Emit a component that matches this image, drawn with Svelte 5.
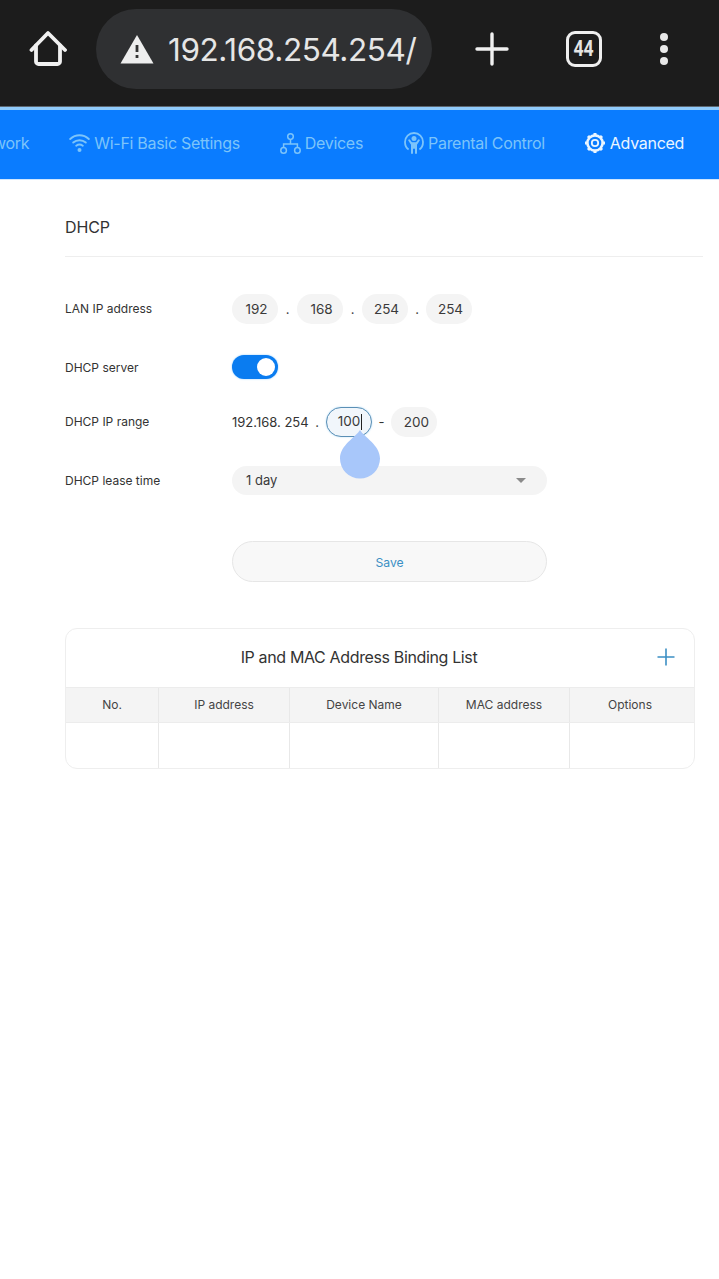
<script>
  const tabs = [
    { label: 'Network', icon: 'none' },
    { label: 'Wi-Fi Basic Settings', icon: 'wifi' },
    { label: 'Devices', icon: 'devices' },
    { label: 'Parental Control', icon: 'parent' },
    { label: 'Advanced', icon: 'gear', active: true }
  ];
  const heads = [
    { label: 'No.', w: 93 },
    { label: 'IP address', w: 131 },
    { label: 'Device Name', w: 149 },
    { label: 'MAC address', w: 131 },
    { label: 'Options', w: 124 }
  ];
</script>

<div class="page">
  <header class="browser">
    <svg class="home" width="38" height="38" viewBox="0 0 38 38" fill="none" stroke="#f0f0f0" stroke-width="3.8" stroke-linecap="round" stroke-linejoin="round">
      <path d="M2.5 20 L19 3 L36 20" />
      <path d="M7 15.5 V31.5 a2.5 2.5 0 0 0 2.5 2.5 H28.5 a2.5 2.5 0 0 0 2.5 -2.5 V15.5" />
    </svg>
    <div class="omnibox">
      <svg width="34" height="30" viewBox="0 0 34 30">
        <path d="M17 1 L33.5 29.5 H0.5 Z" fill="#eeeeee" />
        <rect x="15.6" y="11" width="2.8" height="7" fill="#333" />
        <rect x="15.6" y="21" width="2.8" height="3" fill="#333" />
      </svg>
      <span class="url">192.168.254.254/</span>
    </div>
    <svg class="plus" width="34" height="34" viewBox="0 0 34 34" stroke="#f0f0f0" stroke-width="3.4" stroke-linecap="round">
      <path d="M17 2 V32 M2 17 H32" />
    </svg>
    <div class="count"><span>44</span></div>
    <div class="dots"><i></i><i></i><i></i></div>
  </header>

  <nav class="tabs">
    {#each tabs as t}
      <div class="tab" class:active={t.active} class:parent={t.icon === 'parent'}>
        {#if t.icon === 'wifi'}
          <svg width="21" height="20" viewBox="0 0 21 20" fill="none" stroke="currentColor" stroke-width="1.9" stroke-linecap="round">
            <path d="M1.2 6 C6.5 1 14.5 1 19.8 6" />
            <path d="M4.2 9.5 C7.7 6.4 13.3 6.4 16.8 9.5" />
            <path d="M7.2 12.7 C9.2 11.2 11.8 11.2 13.8 12.7" />
            <circle cx="10.5" cy="17" r="2" fill="currentColor" stroke="none" />
          </svg>
        {:else if t.icon === 'devices'}
          <svg width="21" height="21" viewBox="0 0 21 21" fill="none" stroke="currentColor" stroke-width="1.5">
            <circle cx="10.5" cy="3.6" r="2.8" />
            <circle cx="3.6" cy="17.4" r="2.8" />
            <circle cx="17.4" cy="17.4" r="2.8" />
            <path d="M10.5 6.4 V11 M3.6 14.6 V11 H17.4 V14.6" />
          </svg>
        {:else if t.icon === 'parent'}
          <svg width="20" height="22" viewBox="0 0 20 22" fill="none" stroke="currentColor" stroke-width="1.8">
            <path d="M4.6 17.6 C2.2 16 1 13.2 1 10 C1 5 5 1 10 1 C15 1 19 5 19 10 C19 13.2 17.8 16 15.4 17.6" />
            <circle cx="10" cy="6.6" r="2.5" fill="currentColor" stroke="none" />
            <path d="M5.2 8.2 L7.4 11.4 H12.6 L14.8 8.2 M8 11 V21 M12 11 V21 M10 11 V16" stroke-width="2" stroke-linecap="round" />
          </svg>
        {:else if t.icon === 'gear'}
          <svg width="22" height="22" viewBox="0 0 22 22" fill="none" stroke="currentColor">
            <circle cx="11" cy="11" r="7.6" stroke-width="2.6" />
            <circle cx="11" cy="11" r="3.2" stroke-width="1.8" />
            <path d="M11 1 V3 M11 19 V21 M1 11 H3 M19 11 H21 M4 4 L5.5 5.5 M16.5 16.5 L18 18 M4 18 L5.5 16.5 M16.5 5.5 L18 4" stroke-width="3" />
          </svg>
        {/if}
        <span>{t.label}</span>
      </div>
    {/each}
  </nav>

  <main class="content">
    <h1>DHCP</h1>

    <div class="row lan">
      <span class="label">LAN IP address</span>
      <div class="field">
        <span class="pill">192</span><span class="dot">.</span>
        <span class="pill">168</span><span class="dot">.</span>
        <span class="pill">254</span><span class="dot n">.</span>
        <span class="pill">254</span>
      </div>
    </div>

    <div class="row server">
      <span class="label">DHCP server</span>
      <div class="toggle"><i></i></div>
    </div>

    <div class="row range">
      <span class="label">DHCP IP range</span>
      <div class="field">
        <span class="prefix">192.168. 254</span><span class="dot wide">.</span>
        <span class="pill focus">100<b class="caret"></b>
          <svg class="handle" width="42" height="50" viewBox="0 0 42 50">
            <path d="M21 1 C25 8 41 16 41 29.5 A20 20 0 0 1 1 29.5 C1 16 17 8 21 1 Z" fill="#a8c7fa" />
          </svg>
        </span>
        <span class="dash">-</span>
        <span class="pill end">200</span>
      </div>
    </div>

    <div class="row lease">
      <span class="label">DHCP lease time</span>
      <div class="select"><span>1 day</span><i class="arrow"></i></div>
    </div>

    <div class="save-row"><button class="save">Save</button></div>

    <section class="card">
      <div class="card-title">
        <span>IP and MAC Address Binding List</span>
        <svg class="add" width="18" height="18" viewBox="0 0 18 18" stroke="#3b8fc4" stroke-width="1.6">
          <path d="M9 0.5 V17.5 M0.5 9 H17.5" />
        </svg>
      </div>
      <div class="thead">
        {#each heads as h}
          <div class="th" style="width:{h.w}px">{h.label}</div>
        {/each}
      </div>
      <div class="tbody">
        {#each heads as h}
          <div class="td" style="width:{h.w}px"></div>
        {/each}
      </div>
    </section>
  </main>
</div>

<style>
  :global(body) {
    margin: 0;
    background: #fff;
  }
  .page {
    width: 719px;
    height: 1279px;
    overflow: hidden;
    background: #fff;
    font-family: Inter, "Liberation Sans", sans-serif;
    color: #333;
  }
  .browser {
    box-sizing: border-box;
    height: 107px;
    background: #1c1c1c;
    border-bottom: 1px solid #5b6670;
    display: flex;
    align-items: flex-start;
    padding: 9px 0 0 29px;
  }
  .home { margin-top: 21px; }
  .omnibox {
    box-sizing: border-box;
    width: 336px;
    height: 80px;
    margin-left: 29px;
    border-radius: 40px;
    background: #2f3032;
    display: flex;
    align-items: center;
    padding: 0 0 0 24px;
    overflow: hidden;
    gap: 14px;
  }
  .url {
    font-size: 31.5px;
    color: #e6e6e6;
    white-space: nowrap;
    letter-spacing: -0.4px;
  }
  .plus { margin: 23px 0 0 43px; }
  .count {
    box-sizing: border-box;
    width: 36px;
    height: 36px;
    margin: 22px 0 0 57px;
    border: 3.5px solid #eee;
    border-radius: 9px;
    color: #e4e4e4;
    display: flex;
    align-items: center;
    justify-content: center;
  }
  .count span {
    display: inline-block;
    font: 700 22px/1 Roboto, sans-serif;
    transform: scaleX(0.8);
  }
  .dots {
    margin: 24px 0 0 58px;
    display: flex;
    flex-direction: column;
    gap: 4px;
  }
  .dots i {
    width: 8px;
    height: 8px;
    border-radius: 50%;
    background: #e8e8e8;
  }
  .tabs {
    box-sizing: border-box;
    height: 73px;
    background: #0a7cff;
    border-top: 3px solid #8fcbfb;
    border-bottom: 1px solid #cfe6ff;
    display: flex;
    justify-content: flex-end;
    align-items: center;
    gap: 40px;
    padding: 0 35px 3px 0;
    overflow: hidden;
    white-space: nowrap;
  }
  .tab {
    display: flex;
    align-items: center;
    gap: 4px;
    font-size: 16px;
    letter-spacing: -0.3px;
    color: #7cc4fa;
    flex-shrink: 0;
  }
  .tab.active { color: #eaf5ff; margin-left: -1px; }
  .tab.parent { margin-left: 1px; }
  .content {
    padding: 0 0 0 65px;
  }
  h1 {
    margin: 0 16px 0 0;
    font-size: 16px;
    font-weight: 400;
    letter-spacing: -0.1px;
    color: #333;
    height: 77px;
    line-height: 94px;
    box-sizing: border-box;
    border-bottom: 1px solid #eee;
  }
  .row {
    display: flex;
    align-items: center;
  }
  .label {
    width: 167px;
    font-size: 12px;
    color: #333;
  }
  .lan .label, .range .label { margin-bottom: 2px; }
  .field {
    display: flex;
    align-items: center;
    font-size: 13px;
  }
  .lan { margin-top: 36px; height: 32px; }
  .server { margin-top: 29px; height: 26px; }
  .range { margin-top: 27px; height: 30px; }
  .lease { margin-top: 28px; height: 30px; }
  .pill {
    position: relative;
    box-sizing: border-box;
    width: 46px;
    height: 30px;
    padding-left: 3px;
    line-height: 30px;
    border-radius: 15px;
    background: #f4f4f4;
    text-align: center;
    font-size: 13.5px;
    color: #3a3a3a;
  }
  .pill.end { padding-left: 5px; }
  .dot { width: 19px; text-align: center; color: #444; }
  .dot.n { width: 18px; }
  .dot.wide { width: 18px; }
  .prefix { width: 76px; color: #333; white-space: pre; }
  .pill.focus {
    padding-left: 0;
    background: #f1f6fb;
    border: 1.5px solid #5a8fb5;
    line-height: 27px;
    box-shadow: 0 0 2px #b5dcf7;
  }
  .caret {
    position: absolute;
    left: 34px;
    top: 6px;
    width: 1px;
    height: 16px;
    background: #222;
  }
  .handle {
    position: absolute;
    left: 12px;
    top: 21px;
    pointer-events: none;
  }
  .dash { width: 19px; text-align: center; }
  .toggle {
    box-sizing: border-box;
    width: 46px;
    height: 24px;
    border-radius: 12px;
    background: #0a7cf0;
    box-shadow: 0 0 2px #8fcbfb;
    position: relative;
  }
  .toggle i {
    position: absolute;
    right: 3px;
    top: 3px;
    width: 18px;
    height: 18px;
    border-radius: 50%;
    background: #fff;
  }
  .select {
    box-sizing: border-box;
    width: 315px;
    height: 29px;
    border-radius: 15px;
    background: #f4f4f4;
    display: flex;
    align-items: center;
    justify-content: space-between;
    padding: 0 21px 0 14px;
    font-size: 13px;
    color: #3a3a3a;
  }
  .arrow {
    width: 0;
    height: 0;
    border-left: 5px solid transparent;
    border-right: 5px solid transparent;
    border-top: 5px solid #8a8a8a;
  }
  .save-row {
    padding-left: 167px;
    margin-top: 46px;
  }
  .save {
    display: block;
    box-sizing: border-box;
    width: 315px;
    height: 41px;
    padding-top: 3px;
    border-radius: 21px;
    border: 1px solid #e6e6e6;
    background: #f8f8f8;
    font: 400 12.2px Inter, sans-serif;
    color: #3b8fc4;
  }
  .card {
    box-sizing: border-box;
    width: 630px;
    height: 141px;
    margin-top: 46px;
    border: 1px solid #eee;
    border-radius: 12px;
    overflow: hidden;
  }
  .card-title {
    position: relative;
    box-sizing: border-box;
    height: 58px;
    line-height: 57px;
    padding-right: 42px;
    text-align: center;
    font-size: 16px;
    letter-spacing: -0.36px;
    color: #333;
  }
  .add {
    position: absolute;
    right: 19px;
    top: 19px;
  }
  .thead, .tbody { display: flex; }
  .thead {
    height: 36px;
    background: #f4f4f4;
    border-top: 1px solid #ececec;
    border-bottom: 1px solid #ececec;
    box-sizing: border-box;
  }
  .tbody { height: 45px; }
  .th, .td {
    box-sizing: border-box;
    border-right: 1px solid #e8e8e8;
  }
  .th:last-child, .td:last-child { border-right: 0; }
  .th:last-child { padding-right: 4px; }
  .th {
    font-size: 12px;
    line-height: 34px;
    text-align: center;
    color: #444;
  }
</style>
